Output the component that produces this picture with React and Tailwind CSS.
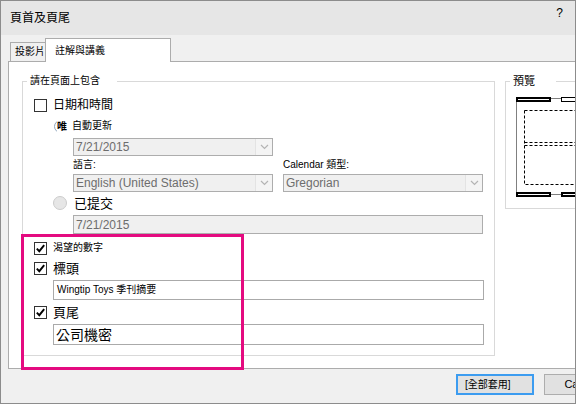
import React from "react";

function Check({ checked }) {
  return (
    <span className="w-[13px] h-[13px] border border-[#333333] bg-white flex items-center justify-center shrink-0">
      {checked && (
        <svg width="11" height="11" viewBox="0 0 11 11">
          <path d="M1.8 5.6 L4.3 8.2 L9.2 2.2" fill="none" stroke="#000" strokeWidth="1.9" />
        </svg>
      )}
    </span>
  );
}

function Chevron() {
  return (
    <svg width="9" height="6" viewBox="0 0 9 6">
      <path d="M1 1 L4.5 4.5 L8 1" fill="none" stroke="#b4b4b4" strokeWidth="1.2" />
    </svg>
  );
}

function Select({ text }) {
  return (
    <div className="w-[200px] h-[18px] border border-[#adadad] bg-[#f0f0f0] flex">
      <span className="flex-1 pl-[2px] flex items-center text-[12px] text-[#6d6d6d]">{text}</span>
      <span className="w-[17px] border-l border-[#e3e3e3] bg-[#f4f4f4] flex items-center justify-center">
        <Chevron />
      </span>
    </div>
  );
}

export default function App() {
  return (
    <div className="relative w-[576px] h-[404px] border border-[#8c8c8c] bg-[#f0f0f0] flex flex-col overflow-hidden leading-none text-black font-['Liberation_Sans','Noto_Sans_CJK_TC',sans-serif]">
      {/* title bar */}
      <div className="h-[34px] bg-[#e6e6e6] flex items-start justify-between pl-[9px] pr-[12px] shrink-0">
        <span className="mt-[9px] text-[12px] leading-[16px]">頁首及頁尾</span>
        <span className="mt-[4px] text-[12px] leading-[16px]">?</span>
      </div>

      {/* tabs */}
      <div className="h-[26px] flex items-end pl-[9px] shrink-0">
        <div className="w-[35px] h-[19px] border-l border-t border-[#acacac] bg-[#f0f0f0] pl-[4px] flex items-center text-[10px]">
          投影片
        </div>
        <div className="relative z-10 w-[126px] h-[24px] mb-[-1px] border border-b-0 border-[#acacac] bg-white pl-[9px] flex items-center text-[10px]">
          註解與講義
        </div>
      </div>

      {/* panel */}
      <div className="ml-[7px] w-[580px] h-[308px] border border-[#acacac] bg-white pt-[13px] pl-[13px] flex items-start gap-[10px] shrink-0">
        <fieldset className="w-[474px] h-[281px] border border-[#d9d9d9]">
          <legend className="ml-[4px] pl-[3px] pr-[17px] text-[10px] leading-[12px]">請在頁面上包含</legend>
          <div className="flex flex-col items-start leading-none">
            <div className="mt-[10px] ml-[11px] h-[16px] flex items-center">
              <Check />
              <span className="ml-[6px] text-[12px]">日期和時間</span>
            </div>
            <div className="mt-[6px] ml-[31px] h-[14px] flex items-center">
              <span className="relative w-[13px] h-[13px] shrink-0">
                <span className="absolute inset-0 rounded-full border border-[#8fa6bd]" />
                <span className="absolute left-[3px] top-0 bg-white text-[10px] leading-[13px] font-bold">唯</span>
              </span>
              <span className="ml-[5px] text-[10px]">自動更新</span>
            </div>
            <div className="mt-[5px] ml-[50px]">
              <Select text="7/21/2015" />
            </div>
            <div className="mt-[3px] ml-[50px] h-[12px] grid grid-cols-[200px_200px] gap-x-[10px] items-center text-[10px]">
              <span>語言:</span>
              <span>Calendar 類型:</span>
            </div>
            <div className="mt-[3px] ml-[50px] grid grid-cols-[200px_200px] gap-x-[10px]">
              <Select text="English (United States)" />
              <Select text="Gregorian" />
            </div>
            <div className="mt-[3px] ml-[30px] h-[16px] flex items-center">
              <span className="w-[14px] h-[14px] rounded-full border border-[#cccccc] bg-[#e6e6e6] shrink-0" />
              <span className="ml-[7px] text-[13px]">已提交</span>
            </div>
            <div className="mt-[4px] ml-[50px] w-[410px] h-[19px] border border-[#adadad] bg-[#f0f0f0] pl-[2px] flex items-center text-[12px] text-[#6d6d6d]">
              7/21/2015
            </div>
            <div className="mt-[7px] ml-[11px] h-[14px] flex items-center">
              <Check checked />
              <span className="ml-[6px] text-[10px]">渴望的數字</span>
            </div>
            <div className="mt-[6px] ml-[11px] h-[14px] flex items-center">
              <Check checked />
              <span className="ml-[6px] text-[13px]">標頭</span>
            </div>
            <div className="mt-[5px] ml-[30px] w-[431px] h-[20px] border border-[#aaaaaa] bg-white pl-[3px] flex items-center text-[10px]">
              Wingtip Toys 季刊摘要
            </div>
            <div className="mt-[5px] ml-[11px] h-[15px] flex items-center">
              <Check checked />
              <span className="ml-[6px] text-[13px]">頁尾</span>
            </div>
            <div className="mt-[4px] ml-[30px] w-[431px] h-[21px] border border-[#aaaaaa] bg-white pl-[2px] flex items-center text-[14px]">
              公司機密
            </div>
          </div>
        </fieldset>

        <fieldset className="w-[80px] h-[134px] border border-[#d9d9d9]">
          <legend className="ml-[4px] pl-[3px] pr-[21px] text-[11px] leading-[12px]">預覽</legend>
          <div className="mt-[9px] ml-[10px]">
            <svg width="70" height="104" viewBox="0 0 70 104">
              <rect x="0.5" y="2.5" width="80" height="96" fill="white" stroke="#808080" strokeWidth="1" />
              <rect x="8.5" y="14.5" width="80" height="74" fill="none" stroke="#000" strokeWidth="1" strokeDasharray="3 2" />
              <line x1="8.5" y1="46.5" x2="70" y2="46.5" stroke="#000" strokeWidth="1" strokeDasharray="3 2" />
              <line x1="8.5" y1="49.5" x2="70" y2="49.5" stroke="#000" strokeWidth="1" strokeDasharray="3 2" />
              <rect x="1" y="2" width="33" height="3" fill="white" stroke="#000" strokeWidth="2" />
              <rect x="45.5" y="1.5" width="30" height="4" fill="white" stroke="#000" strokeWidth="1" />
              <rect x="1" y="97" width="33" height="3" fill="white" stroke="#000" strokeWidth="2" />
              <rect x="46" y="97" width="30" height="3" fill="white" stroke="#000" strokeWidth="2" />
            </svg>
          </div>
        </fieldset>
      </div>

      {/* buttons */}
      <div className="mt-[5px] ml-[455px] flex gap-[10px] shrink-0">
        <div className="w-[78px] h-[21px] border-2 border-[#3c9cf0] bg-[#e1e1e1] pl-[7px] flex items-center text-[10px] shrink-0">
          [全部套用]
        </div>
        <div className="w-[75px] h-[21px] border border-[#adadad] bg-[#e1e1e1] flex items-center justify-center text-[11px] shrink-0">
          Cancel
        </div>
      </div>

      {/* annotation highlight */}
      <div className="absolute left-[20px] top-[233px] w-[223px] h-[136px] border-[3px] border-[#e40b80] pointer-events-none" />
    </div>
  );
}
